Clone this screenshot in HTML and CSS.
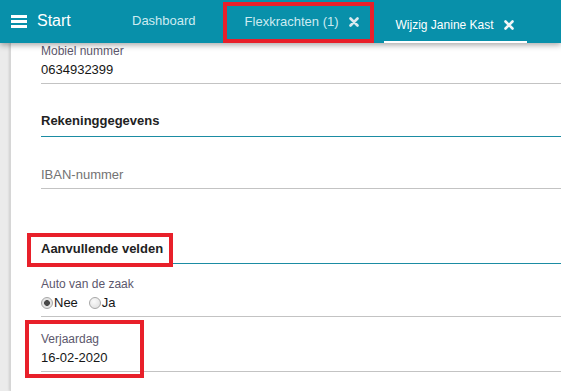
FILE: index.html
```html
<!DOCTYPE html>
<html lang="nl">
<head>
<meta charset="utf-8">
<title>Wijzig Janine Kast</title>
<link rel="stylesheet" href="styles.css">
</head>
<body>
<header class="topbar">
  <div class="brand">
    <svg class="burger" width="16" height="13" viewBox="0 0 16 13"><rect x="0" y="0" width="16" height="3" fill="#fff"/><rect x="0" y="5" width="16" height="3" fill="#fff"/><rect x="0" y="10" width="16" height="3" fill="#fff"/></svg>
    <span class="brand-text">Start</span>
  </div>
  <nav class="tabs">
    <div class="tab tab-plain">Dashboard</div>
    <div class="tab tab-marked">Flexkrachten (1)
      <svg class="close" width="10" height="10" viewBox="0 0 10 10"><path d="M1.5 1.5 L8.5 8.5 M8.5 1.5 L1.5 8.5" stroke="currentColor" stroke-width="2.6" stroke-linecap="round"/></svg>
    </div>
    <div class="tab tab-active">Wijzig Janine Kast
      <svg class="close" width="10" height="10" viewBox="0 0 10 10"><path d="M1.5 1.5 L8.5 8.5 M8.5 1.5 L1.5 8.5" stroke="currentColor" stroke-width="2.6" stroke-linecap="round"/></svg>
    </div>
  </nav>
</header>
<div class="page">
  <div class="gutter"></div>
  <main class="card">
    <div class="field">
      <div class="label">Mobiel nummer</div>
      <div class="value">0634932399</div>
    </div>
    <h2 class="section first">Rekeninggegevens</h2>
    <div class="field iban">
      <div class="value placeholder">IBAN-nummer</div>
    </div>
    <h2 class="section extra"><span>Aanvullende velden</span></h2>
    <div class="field auto">
      <div class="label">Auto van de zaak</div>
      <div class="value radios">
        <label class="radio"><input type="radio" name="auto" checked><span>Nee</span></label>
        <label class="radio"><input type="radio" name="auto"><span>Ja</span></label>
      </div>
    </div>
    <div class="field birthday">
      <div class="label">Verjaardag</div>
      <div class="value">16-02-2020</div>
    </div>
  </main>
</div>
</body>
</html>
```
FILE: styles.css
```css
*, *::before, *::after { box-sizing: border-box; }
html, body { margin: 0; padding: 0; }
body {
  font-family: "Liberation Sans", Arial, sans-serif;
  background: #fff;
  color: #1e1e1e;
  overflow: hidden;
}

.topbar {
  position: relative;
  z-index: 2;
  display: flex;
  height: 43px;
  background: #0890aa;
  box-shadow: 0 2px 6px rgba(0, 0, 0, 0.35);
}
.brand {
  width: 110px;
  display: flex;
  align-items: center;
  padding-left: 11px;
  padding-bottom: 1px;
}
.burger { display: block; margin-top: 1px; }
.brand-text {
  margin-left: 10px;
  color: #fff;
  font-size: 16px;
  line-height: 18px;
}
.tabs { display: flex; }
.tab {
  display: flex;
  align-items: center;
  font-size: 13px;
  line-height: 16px;
  color: #cdebf1;
  white-space: nowrap;
}
.tab-plain {
  padding: 0 27px 1px 22px;
}
.tab-marked {
  margin-top: 2px;
  height: 41px;
  border: 4px solid #e8202a;
  padding: 0 11px 2px 18px;
}
.tab-marked .close { color: #d9e9ee; margin-left: 10px; }
.tab-active {
  margin-left: 10px;
  height: 43px;
  padding: 9px 13px 0 12px;
  font-size: 12px;
  color: #fff;
  border-bottom: 2px solid #fff;
}
.tab-active .close { color: #f2f6f7; margin-left: 10px; }
.close { display: block; }

.page {
  display: flex;
  min-height: calc(100vh - 43px);
}
.gutter {
  width: 10px;
  background: #ebebeb;
  flex: none;
}
.card {
  flex: 1;
  background: #fff;
  border-left: 1px solid #d6d6d6;
  box-shadow: -1px 0 2px rgba(0, 0, 0, 0.12);
  padding-left: 30px;
}

.field {
  position: relative;
  border-bottom: 1px solid #c3c3c3;
  padding-bottom: 4px;
}
.label {
  font-size: 12px;
  line-height: 16px;
  color: #5c576c;
}
.value {
  margin-top: 2px;
  font-size: 13px;
  line-height: 18px;
  color: #161616;
}
.placeholder { color: #737373; margin-top: 0; }

.section {
  margin: 0;
  font-size: 13px;
  font-weight: bold;
  line-height: 18px;
  color: #222;
  border-bottom: 1px solid #1b8ca3;
}
.section.first {
  margin-top: 28px;
  padding-bottom: 6px;
}
.field.iban { margin-top: 29px; }
.section.extra {
  position: relative;
  margin-top: 51px;
  padding-bottom: 5px;
}
.section.extra::after {
  content: "";
  position: absolute;
  top: -7px;
  left: -14px;
  width: 146px;
  height: 34px;
  border: 4px solid #e8202a;
}
.field.auto { margin-top: 12px; }
.radios {
  display: flex;
  align-items: center;
  gap: 11px;
}
.radio {
  display: flex;
  align-items: center;
}
.radio input {
  -webkit-appearance: none;
  appearance: none;
  width: 12px;
  height: 12px;
  margin: 0 1px 0 0;
  border: 1px solid #a7a7a7;
  border-radius: 50%;
  background: radial-gradient(circle at 40% 35%, #fafafa 0%, #dcdcdc 100%);
}
.radio input:checked {
  background: radial-gradient(circle, #4a4a4a 0 2.6px, #e4e4e4 3.2px);
}

.field.birthday { margin-top: 14px; }
.field.birthday::after {
  content: "";
  position: absolute;
  top: -11px;
  left: -16px;
  width: 119px;
  height: 58px;
  border: 4px solid #e8202a;
}
```
